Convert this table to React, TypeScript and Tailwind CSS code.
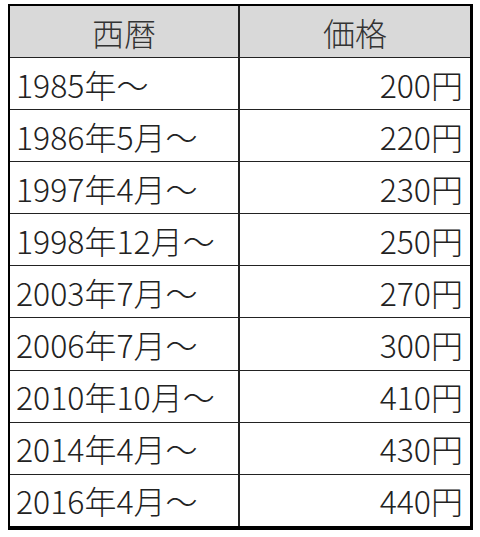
import React from "react";

const rows: [string, string][] = [
  ["1985年～", "200円"],
  ["1986年5月～", "220円"],
  ["1997年4月～", "230円"],
  ["1998年12月～", "250円"],
  ["2003年7月～", "270円"],
  ["2006年7月～", "300円"],
  ["2010年10月～", "410円"],
  ["2014年4月～", "430円"],
  ["2016年4月～", "440円"],
];

export default function App() {
  return (
    <div className="w-[480px] h-[537px] bg-white pt-[4px] pl-[8px]" style={{ fontFamily: '"Noto Sans CJK JP", "Noto Sans", sans-serif' }}>
      <div className="w-[465px] border-l-2 border-t-2 border-r-[3px] border-b-[4px] border-black text-[#222] text-[32px] leading-none font-light">
        <div className="grid grid-cols-[230px_1fr] h-[51px] bg-[#d9d9d9]">
          <div className="flex items-center justify-center border-r-2 border-[#222] text-[#333]">西暦</div>
          <div className="flex items-center justify-center text-[#333]">価格</div>
        </div>
        {rows.map(([a, b]) => (
          <div key={a} className="grid grid-cols-[230px_1fr] h-[52.1px] border-t-[1.5px] border-[#222]">
            <div className="flex items-center pl-[6px] border-r-2 border-[#222]">{a}</div>
            <div className="flex items-center justify-end pr-[7px]">{b}</div>
          </div>
        ))}
      </div>
    </div>
  );
}
